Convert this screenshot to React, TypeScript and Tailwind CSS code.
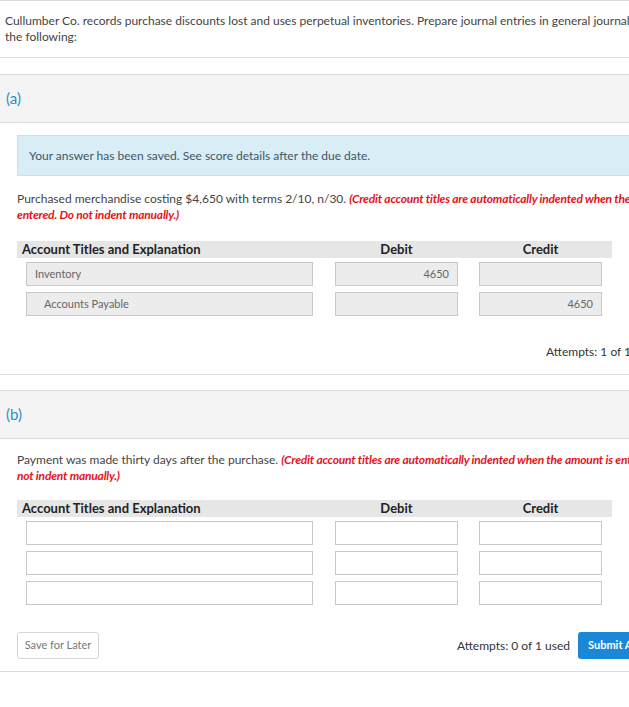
import React from "react";

type Row = { account: string; debit: string; credit: string; indent?: boolean };

const font = { fontFamily: "Lato, 'Open Sans', sans-serif" };

function JournalTable({ rows, filled }: { rows: Row[]; filled: boolean }) {
  const box = filled
    ? "h-[24px] bg-[#ececec] border border-[#c8c8c8] text-[11px] text-[#666] flex items-center"
    : "h-[24px] bg-white border border-[#c8c8c8]";

  return (
    <div className="ml-[17px] w-[595px]">
      <div className="h-[17px] bg-[#e6e6e6] flex items-center text-[13px] font-bold text-[#222]">
        <div className="w-[296px] pl-[5px]">Account Titles and Explanation</div>
        <div className="w-[123px] text-center ml-[22px]">Debit</div>
        <div className="w-[123px] text-center ml-[21px]">Credit</div>
      </div>
      <div className="flex flex-col gap-[6px] pt-[4px]">
        {rows.map((r, i) => (
          <div key={i} className="flex">
            <div className={`${box} ml-[9px] w-[287px] ${r.indent ? "pl-[17px]" : "pl-[8px]"}`}>
              {r.account}
            </div>
            <div className={`${box} ml-[22px] w-[123px] justify-end pr-[8px]`}>{r.debit}</div>
            <div className={`${box} ml-[21px] w-[123px] justify-end pr-[8px]`}>{r.credit}</div>
          </div>
        ))}
      </div>
    </div>
  );
}

function SectionHead({ label }: { label: string }) {
  return (
    <div className="h-[49px] bg-[#f4f4f4] border-y border-[#dcdcdc] flex items-center pl-[6px] text-[15px] text-[#2f8fc3]">
      {label}
    </div>
  );
}

export default function App() {
  const rowsA: Row[] = [
    { account: "Inventory", debit: "4650", credit: "" },
    { account: "Accounts Payable", debit: "", credit: "4650", indent: true },
  ];
  const rowsB: Row[] = [
    { account: "", debit: "", credit: "" },
    { account: "", debit: "", credit: "" },
    { account: "", debit: "", credit: "" },
  ];

  return (
    <div className="w-[629px] h-[707px] overflow-hidden bg-white" style={font}>
      <div className="w-[700px]">
        {/* intro */}
        <div className="border-t border-b border-[#dcdcdc] pt-[12px] pb-[12px] px-[5px] text-[12px] leading-[16px] text-[#444] whitespace-nowrap">
          Cullumber Co. records purchase discounts lost and uses perpetual inventories. Prepare journal entries in general journal form for
          <br />
          the following:
        </div>

        <div className="h-[16px]" />
        <SectionHead label="(a)" />

        <div className="ml-[17px] mt-[12px] h-[41px] bg-[#d9edf7] border border-[#c4e3f0] flex items-center pl-[11px] text-[12px] text-[#3b5866]">
          Your answer has been saved. See score details after the due date.
        </div>

        <div className="px-[17px] pt-[15px] text-[12px] leading-[16px] text-[#444] whitespace-nowrap">
          Purchased merchandise costing $4,650 with terms 2/10, n/30.{" "}
          <span className="text-[#e3141b] font-bold italic tracking-[-0.2px]">
            (Credit account titles are automatically indented when the amount is
          </span>
          <br />
          <span className="text-[#e3141b] font-bold italic tracking-[-0.2px]">entered. Do not indent manually.)</span>
        </div>

        <div className="mt-[18px]">
          <JournalTable rows={rowsA} filled />
        </div>

        <div className="pl-[546px] pt-[27px] pb-[14px] text-[12px] leading-[17px] text-[#333] whitespace-nowrap">
          Attempts: 1 of 1 used
        </div>

        <div className="border-t border-[#dcdcdc] h-[16px]" />
        <SectionHead label="(b)" />

        <div className="px-[17px] pt-[13px] text-[12px] leading-[16px] text-[#444] whitespace-nowrap">
          Payment was made thirty days after the purchase.{" "}
          <span className="text-[#e3141b] font-bold italic tracking-[-0.2px]">
            (Credit account titles are automatically indented when the amount is entered. Do
          </span>
          <br />
          <span className="text-[#e3141b] font-bold italic tracking-[-0.2px]">not indent manually.)</span>
        </div>

        <div className="mt-[16px]">
          <JournalTable rows={rowsB} filled={false} />
        </div>

        <div className="flex items-center pl-[17px] pt-[27px] pb-[12px] border-b border-[#dcdcdc]">
          <button className="w-[82px] h-[27px] border border-[#d6d6d6] rounded-[3px] bg-white text-[11px] text-[#777]">
            Save for Later
          </button>
          <div className="ml-[275px] w-[196px] text-right text-[12px] text-[#333] whitespace-nowrap">
            Attempts: 0 of 1 used
          </div>
          <button className="ml-[8px] h-[27px] px-[10px] rounded-[3px] bg-[#1a88d6] text-white text-[11px] font-bold whitespace-nowrap">
            Submit Answer
          </button>
        </div>
      </div>
    </div>
  );
}
